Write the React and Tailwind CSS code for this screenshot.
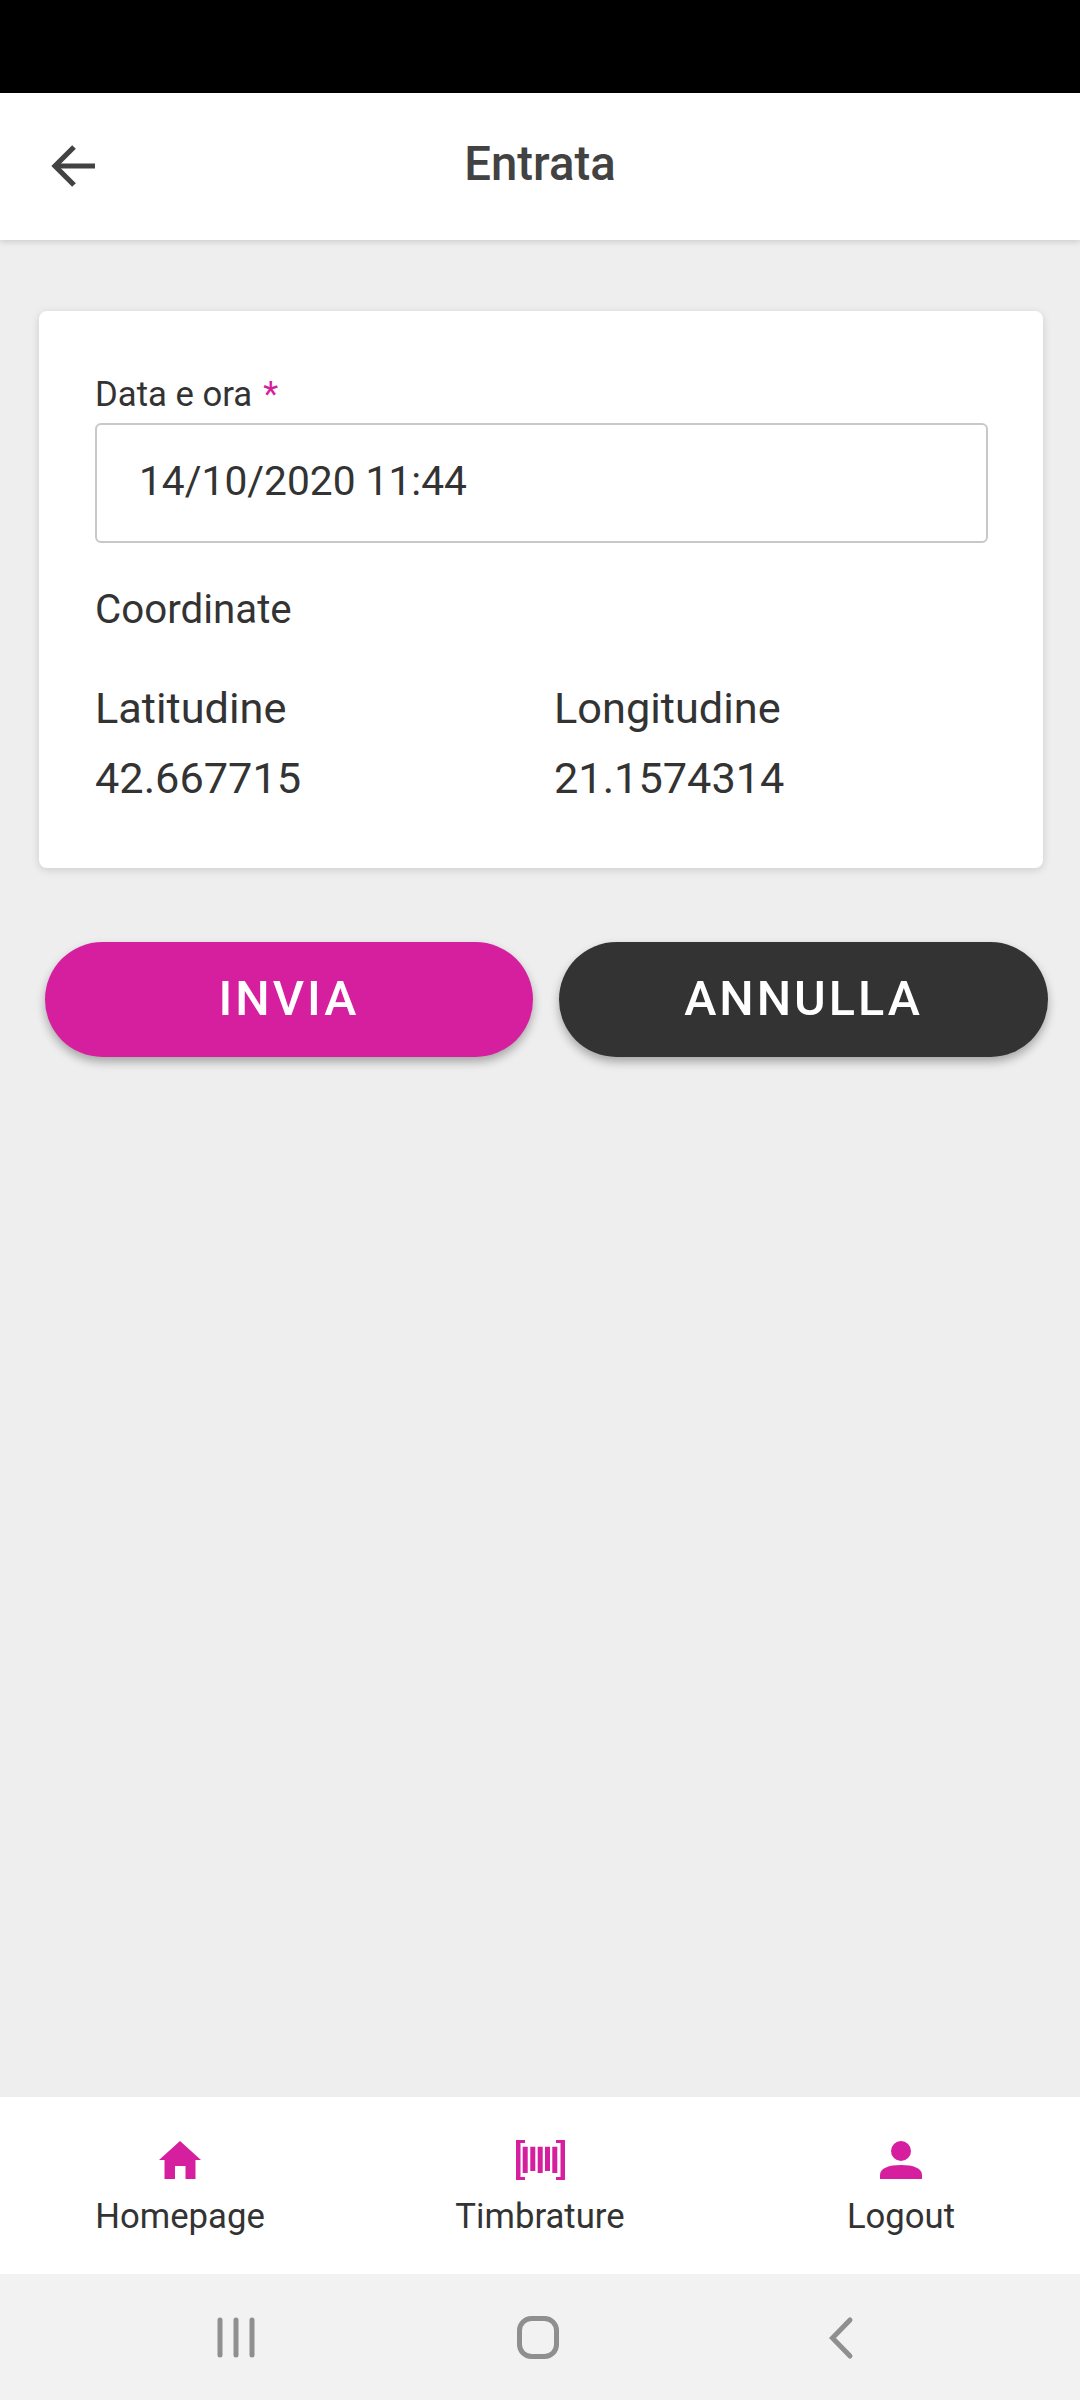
export default function App() {
  const font = { fontFamily: 'Roboto, sans-serif' };
  return (
    <div style={font} className="flex h-[2400px] w-[1080px] flex-col overflow-hidden bg-[#eeeeee] text-[#333333]">
      <div className="h-[93px] shrink-0 bg-black" />
      <header className="relative z-10 flex h-[147px] shrink-0 items-center justify-center bg-white pb-[4px] shadow-[0_2px_6px_rgba(0,0,0,0.14)]">
        <svg className="absolute left-[50px] top-[50px] h-[46px] w-[46px]" viewBox="0 0 46 46" fill="none" stroke="#424242" strokeWidth="5.2">
          <path d="M45 23H5" />
          <path d="M24 4 5 23l19 19" />
        </svg>
        <h1 className="text-[47.3px] font-medium leading-none text-[#424242]">Entrata</h1>
      </header>
      <main className="flex flex-1 flex-col">
        <section className="mx-[39px] mt-[71px] h-[557px] w-[1004px] rounded-[8px] bg-white px-[56px] pt-[60px] shadow-[0_2px_8px_rgba(0,0,0,0.14)]">
          <div className="flex h-[52px] items-start text-[34.7px] leading-[46px]">
            Data e ora <span className="ml-[11px] text-[#d61f9e]">*</span>
          </div>
          <div className="flex h-[120px] w-[893px] items-center rounded-[6px] border-2 border-[#c8c8c8] pb-[2px] pl-[42px] text-[40.7px]">14/10/2020 11:44</div>
          <div className="mt-[42px] text-[40.3px] leading-[50px]">Coordinate</div>
          <div className="mt-[39px] grid grid-cols-[459px_1fr] text-[43.3px] leading-[70px]">
            <div>
              <div>Latitudine</div>
              <div>42.667715</div>
            </div>
            <div>
              <div>Longitudine</div>
              <div>21.1574314</div>
            </div>
          </div>
        </section>
        <div className="ml-[45px] mt-[74px] flex gap-[26px]">
          <button className="flex h-[115px] w-[488px] items-center justify-center rounded-full bg-[#d61f9e] text-[48.5px] font-medium tracking-[3px] text-white shadow-[0_5px_10px_rgba(0,0,0,0.3)]">INVIA</button>
          <button className="flex h-[115px] w-[489px] items-center justify-center rounded-full bg-[#333333] text-[48.5px] font-medium tracking-[3px] text-white shadow-[0_5px_10px_rgba(0,0,0,0.3)]">ANNULLA</button>
        </div>
      </main>
      <nav className="grid h-[177px] shrink-0 grid-cols-3 bg-white text-[34.7px]">
        <div className="flex flex-col items-center pt-[44px]">
          <svg className="h-[38px] w-[42px]" viewBox="0 0 42 38" fill="#d61f9e"><path d="M21 0 42 19H36.5V38H26.5V25H16V38H5.5V19H0Z" /></svg>
          <span className="mt-[15px] leading-[44px]">Homepage</span>
        </div>
        <div className="flex flex-col items-center pt-[43px]">
          <svg className="h-[40px] w-[49px]" viewBox="0 0 49 40" fill="#d61f9e"><path d="M0 0H9V3H4.5V37H9V40H0ZM40 0H49V40H40V37H44.5V3H40ZM6.7 6.7H11.7V33H6.7ZM14.3 6.7H19.3V31H14.3ZM21.7 6.7H26.7V33H21.7ZM29 6.7H34V31H29ZM36.3 6.7H41.3V33H36.3Z" /></svg>
          <span className="mt-[14px] leading-[44px]">Timbrature</span>
        </div>
        <div className="flex flex-col items-center pl-[2px] pt-[44px]">
          <svg className="h-[38px] w-[42px]" viewBox="0 0 42 38" fill="#d61f9e"><circle cx="21" cy="10" r="10" /><path d="M0 38V34C0 27 9 24 21 24S42 27 42 34V38Z" /></svg>
          <span className="mt-[15px] leading-[44px]">Logout</span>
        </div>
      </nav>
      <div className="h-[126px] shrink-0 bg-[#f2f2f2]">
        <svg className="h-[126px] w-[1080px]" viewBox="0 0 1080 126" fill="none" stroke="#8f8f8f" strokeLinecap="round">
          <path d="M220 46V81M236 46V81M252 46V81" strokeWidth="5" />
          <rect x="519.5" y="44.5" width="37" height="38" rx="12" strokeWidth="5" />
          <path d="M850 46 832.5 64l17.5 18" strokeWidth="5" />
        </svg>
      </div>
    </div>
  );
}
